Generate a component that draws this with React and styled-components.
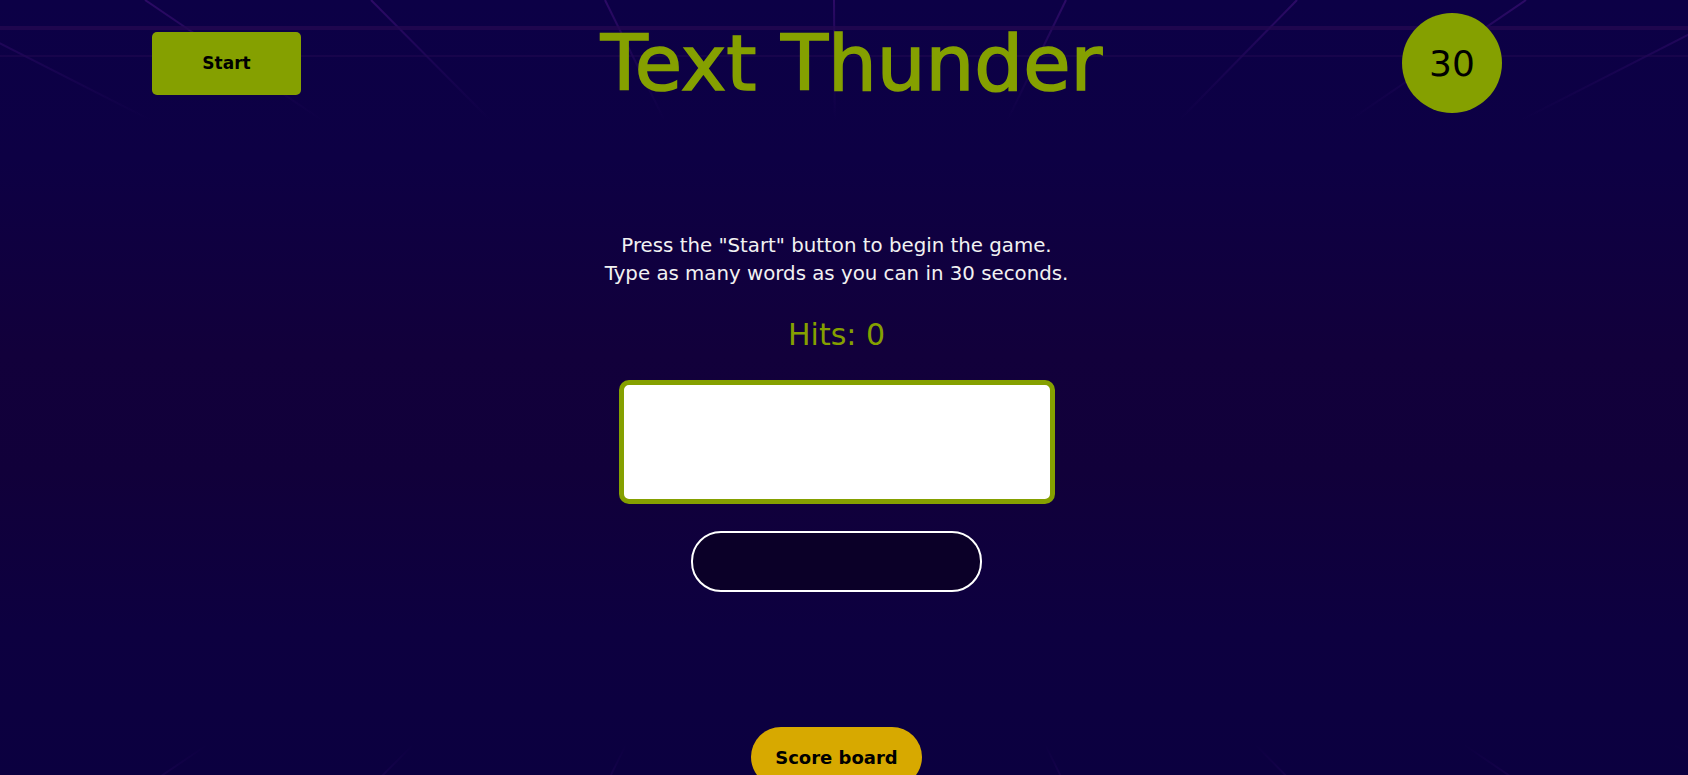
import React, { useState } from "react";
import styled, { createGlobalStyle } from "styled-components";

const GlobalStyle = createGlobalStyle`
  html, body {
    margin: 0;
    padding: 0;
    height: 100%;
    overflow: hidden;
  }
  body {
    font-family: "DejaVu Sans", "Liberation Sans", sans-serif;
    background: #0c0045;
  }
`;

const OLIVE = "#85a000";

const Page = styled.div`
  position: relative;
  min-height: 100vh;
  overflow: hidden;
  background: linear-gradient(
    180deg,
    #0c0046 0%,
    #0d0044 20%,
    #12003b 45%,
    #11003a 60%,
    #0d0040 80%,
    #0b0040 100%
  );
`;

const Grid = styled.svg`
  position: absolute;
  left: 0;
  width: 100%;
  pointer-events: none;
  opacity: ${(p) => p.$fade};
  ${(p) => (p.$bottom ? "bottom: 0; transform: scaleY(-1);" : "top: 0;")}
`;

const Header = styled.header`
  position: relative;
  display: flex;
  align-items: center;
  padding: 13px 186px 0 152px;
`;

const StartButton = styled.button`
  width: 149px;
  height: 63px;
  border: none;
  border-radius: 5px;
  background: ${OLIVE};
  color: #000;
  font-family: inherit;
  font-size: 17px;
  font-weight: 700;
  cursor: pointer;
`;

const Title = styled.h1`
  flex: 1;
  margin: 0;
  text-align: center;
  color: ${OLIVE};
  font-size: 77px;
  font-weight: 400;
  line-height: 1;
  -webkit-text-stroke: 1.6px ${OLIVE};
`;

const Timer = styled.div`
  width: 100px;
  height: 100px;
  border-radius: 50%;
  background: ${OLIVE};
  color: #000;
  display: flex;
  align-items: center;
  justify-content: center;
  font-size: 36px;
`;

const Main = styled.main`
  position: relative;
  display: flex;
  flex-direction: column;
  align-items: center;
  padding-right: 15px;
`;

const Intro = styled.p`
  margin: 119px 0 0;
  color: #f2f2f2;
  font-size: 19.8px;
  line-height: 28px;
  text-align: center;
`;

const Hits = styled.h2`
  margin: 29px 0 0;
  color: ${OLIVE};
  font-size: 30px;
  font-weight: 400;
  line-height: 36px;
`;

const WordInput = styled.input`
  box-sizing: border-box;
  margin-top: 27px;
  width: 436px;
  height: 124px;
  border: 5px solid ${OLIVE};
  border-radius: 10px;
  background: #fff;
  outline: none;
  font-family: inherit;
  font-size: 24px;
  text-align: center;
`;

const WordBox = styled.div`
  box-sizing: border-box;
  margin-top: 27px;
  width: 291px;
  height: 61px;
  border: 2px solid #fff;
  border-radius: 30px;
  background: #0b0028;
  color: #fff;
  display: flex;
  align-items: center;
  justify-content: center;
  font-size: 22px;
`;

const ScoreButton = styled.button`
  margin-top: 135px;
  height: 60px;
  padding: 0 24px;
  border: none;
  border-radius: 30px;
  background: #d7a900;
  color: #000;
  font-family: inherit;
  font-size: 18px;
  font-weight: 700;
  cursor: pointer;
`;

function PerspectiveGrid({ id, bottom, height, fade, rows }) {
  const vx = 837;
  const vy = 470;
  const starts = [-315, -85, 145, 371, 605, 834, 1066, 1297, 1526, 1756, 1990];
  return (
    <Grid
      $bottom={bottom}
      $fade={fade}
      height={height}
      viewBox={`0 0 1688 ${height}`}
      preserveAspectRatio="none"
    >
      <defs>
        <linearGradient id={id} x1="0" y1="0" x2="0" y2="1">
          <stop offset="0" stopColor="#3a0f73" stopOpacity="0.7" />
          <stop offset="0.5" stopColor="#3a0f73" stopOpacity="0.3" />
          <stop offset="1" stopColor="#3a0f73" stopOpacity="0" />
        </linearGradient>
      </defs>
      <g stroke={`url(#${id})`} fill="none">
        {starts.map((x) => (
          <line
            key={x}
            x1={x}
            y1="0"
            x2={x + ((vx - x) * height) / vy}
            y2={height}
            strokeWidth="2"
          />
        ))}
      </g>
      {rows.map((r) => (
        <rect key={r.y} x="0" y={r.y} width="1688" height={r.h} fill="#250852" opacity={r.o} />
      ))}
    </Grid>
  );
}

export default function App() {
  const [hits] = useState(0);
  const [word, setWord] = useState("");

  return (
    <Page>
      <GlobalStyle />
      <PerspectiveGrid
        id="gridTop"
        height={120}
        fade={1}
        rows={[
          { y: 26, h: 4, o: 0.75 },
          { y: 55, h: 2, o: 0.45 },
        ]}
      />
      <PerspectiveGrid
        id="gridBottom"
        bottom
        height={45}
        fade={0.45}
        rows={[{ y: 2, h: 2, o: 0.5 }]}
      />
      <Header>
        <StartButton>Start</StartButton>
        <Title>Text Thunder</Title>
        <Timer>30</Timer>
      </Header>
      <Main>
        <Intro>
          Press the "Start" button to begin the game.
          <br />
          Type as many words as you can in 30 seconds.
        </Intro>
        <Hits>Hits: {hits}</Hits>
        <WordInput value={word} onChange={(e) => setWord(e.target.value)} />
        <WordBox />
        <ScoreButton>Score board</ScoreButton>
      </Main>
    </Page>
  );
}
